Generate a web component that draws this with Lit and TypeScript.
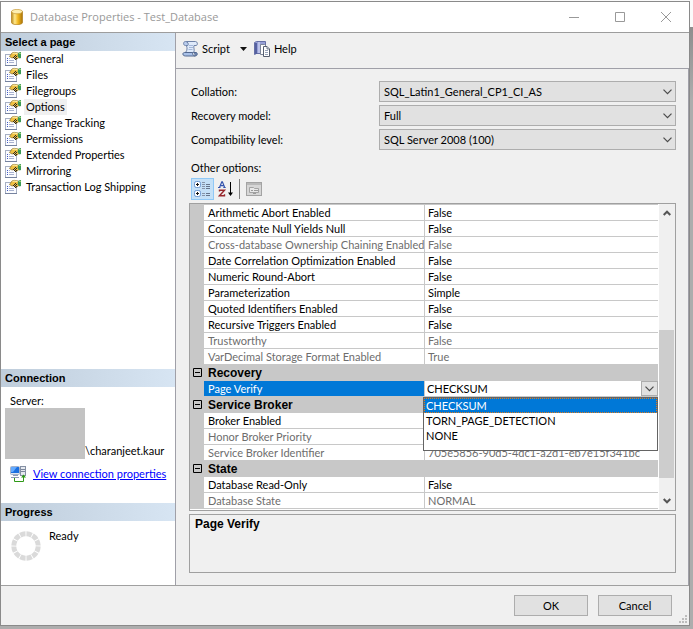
import { LitElement, html, css, svg, nothing } from "lit";
import { customElement, property, state } from "lit/decorators.js";
import { classMap } from "lit/directives/class-map.js";

interface Option {
  name: string;
  value: string;
  locked?: boolean;
  choices?: string[];
}
interface Group {
  title?: string;
  options: Option[];
}

const PAGES = [
  "General",
  "Files",
  "Filegroups",
  "Options",
  "Change Tracking",
  "Permissions",
  "Extended Properties",
  "Mirroring",
  "Transaction Log Shipping",
];

const SETTINGS = [
  { id: "collation", label: "Collation:", value: "SQL_Latin1_General_CP1_CI_AS" },
  { id: "recovery", label: "Recovery model:", value: "Full" },
  { id: "compat", label: "Compatibility level:", value: "SQL Server 2008 (100)" },
];

const GROUPS: Group[] = [
  {
    options: [
      { name: "Arithmetic Abort Enabled", value: "False" },
      { name: "Concatenate Null Yields Null", value: "False" },
      { name: "Cross-database Ownership Chaining Enabled", value: "False", locked: true },
      { name: "Date Correlation Optimization Enabled", value: "False" },
      { name: "Numeric Round-Abort", value: "False" },
      { name: "Parameterization", value: "Simple" },
      { name: "Quoted Identifiers Enabled", value: "False" },
      { name: "Recursive Triggers Enabled", value: "False" },
      { name: "Trustworthy", value: "False", locked: true },
      { name: "VarDecimal Storage Format Enabled", value: "True", locked: true },
    ],
  },
  {
    title: "Recovery",
    options: [
      { name: "Page Verify", value: "CHECKSUM", choices: ["CHECKSUM", "TORN_PAGE_DETECTION", "NONE"] },
    ],
  },
  {
    title: "Service Broker",
    options: [
      { name: "Broker Enabled", value: "False" },
      { name: "Honor Broker Priority", value: "False", locked: true },
      { name: "Service Broker Identifier", value: "705e5856-90d5-4dc1-a2d1-eb7e15f341bc", locked: true },
    ],
  },
  {
    title: "State",
    options: [
      { name: "Database Read-Only", value: "False" },
      { name: "Database State", value: "NORMAL", locked: true },
    ],
  },
];

const icon = (w: number, h: number, body: unknown) =>
  html`<svg class="icon" width=${w} height=${h} viewBox="0 0 ${w} ${h}" aria-hidden="true">${body}</svg>`;

const databaseIcon = () => icon(12, 16, svg`
  <defs><linearGradient id="gold"><stop offset="0" stop-color="#b98a1c"/><stop offset=".3" stop-color="#ffe88c"/><stop offset=".6" stop-color="#f2b71d"/><stop offset="1" stop-color="#a8730a"/></linearGradient></defs>
  <path d="M.5 2.5v11c0 1.3 2.5 2.2 5.500 2.200s5.500-.9 5.500-2.200v-11z" fill="url(#gold)" stroke="#b07d18" stroke-width=".7"/>
  <ellipse cx="6" cy="2.600" rx="5.500" ry="2.200" fill="#fdeeb0" stroke="#c79a35" stroke-width=".7"/>`);

const pageIcon = () => icon(17, 16, svg`
  <rect x=".5" y="3.500" width="11" height="11" fill="#fbfcff" stroke="#a7b0c4"/>
  <path d="M0 14.500h12" stroke="#76839f"/>
  <path d="M2 7.500h1M2 9.500h1M2 11.500h1" stroke="#3f57c4"/>
  <path d="M4 7.500h1M4 9.500h5M4 11.500h5" stroke="#a9b2cf"/>
  <path d="M4.500 5.500 7 2l2-.7 4 .7 1.500 2-1 3-2.500 1.500-2-2-2 .5z" fill="#efc042" stroke="#8a6e22" stroke-width=".7"/>
  <path d="M7.500 2.600 9 2l3.500.6" stroke="#fff3b5" fill="none"/>
  <path d="M8 6.500h1M10 6.500h1M9 5.500h1M11 5.500h1M9 7.500h1M11 7.500h1M10 4.500h1M10 8.500h1" stroke="#2b2720"/>
  <path d="M13.500 1.500l2.500-.5v6l-1.500.5-2-2.500z" fill="#3c9a55"/>
  <path d="M14 2.500h2" stroke="#9ad072"/>`);

const scriptIcon = () => icon(17, 16, svg`
  <path d="M4 .5h9.500c2.300 0 2.500 4 .5 4h-2c-.8 2 1 4.500-.3 7H3.500c2-2.500 1.800-4.500.9-7-.9-1-1.200-3-.4-4z" fill="#dfeafa" stroke="#6f83a8"/>
  <path d="M3.500.5c-2.600 0-2.600 4 0 4h2.300c1-1 .4-4-2.300-4z" fill="#b9cced" stroke="#6f83a8"/>
  <path d="M2.500 11.500h8c0 1.800.8 3.500 2.500 3.500H3.500c-3.300 0-3.300-3.500-1-3.500z" fill="#a9c1e8" stroke="#53688f"/>
  <path d="M13 15c2.500 0 2.800-2.500 1.500-3.500H11.500" fill="#6e85ae" stroke="#53688f"/>
  <path d="M7 4.500h4M7 6.500h4M6.500 8.500h4" stroke="#a4b8da"/>`);

const helpIcon = () => icon(17, 16, svg`
  <path d="M.5 1.500 2.500.5h9v12h-9l-2 1z" fill="#97a0d6" stroke="#6670a6"/>
  <path d="M1 2h2v11H1z" fill="#5661a0"/>
  <path d="M4 1h2v11H4z" fill="#bcc3ea"/>
  <path d="M6.500 3.500h4l2 2v8h-6z" fill="#fff" stroke="#7c8598"/>
  <path d="M9.500 5.500h3.500l2.500 2.500v7.500h-6z" fill="#fff" stroke="#565f70"/>
  <path d="M13 5.500V8h2.500" fill="#d4dae6" stroke="#565f70" stroke-width=".8"/>
  <path d="M11 9.500h3M11 11.500h3M11 13.500h3" stroke="#98a3b8"/>`);

const categorizedIcon = () => icon(17, 16, svg`
  <rect x=".5" y=".5" width="6" height="6" rx="1.800" fill="#fff" stroke="#6f9ad2"/>
  <rect x=".5" y="9.500" width="6" height="6" rx="1.800" fill="#fff" stroke="#6f9ad2"/>
  <path d="M2 3.500h3M3.500 2v3M2 12.500h3M3.500 11v3" stroke="#111"/>
  <path d="M8 1.500h3M8 3.500h3M8 5.500h3M8 7.500h3M8 12.500h3M8 14.500h3" stroke="#8794a8"/>
  <path d="M12 3.500h4M12 5.500h4M12 7.500h4M12 12.500h4M12 14.500h4" stroke="#66758c"/>`);

const sortIcon = () => icon(16, 16, svg`
  <path d="M1.500 6.500 3.800.8h.6L6.700 6.500M2.400 4.600h3.400M0 6.500h2.500M5.300 6.500h2.400" fill="none" stroke="#3353ad" stroke-width="1.200"/>
  <path d="M1.500 10.500V9.300h5L1.500 14.700h5v-1.500" fill="none" stroke="#97272c" stroke-width="1.400"/>
  <path d="M12.500 1v12" stroke="#000"/><path d="M10 11.500h5L12.500 15z"/>`);

const pagesIcon = () => icon(16, 16, svg`
  <rect x=".5" y="1.500" width="15" height="13" fill="#d6d6d6" stroke="#a3a3a3"/>
  <rect x="1" y="2" width="14" height="2" fill="#b9b9b9"/>
  <path d="M3.500 6.500h4l1 1h4v4h-9z" fill="#e8e8e8" stroke="#a3a3a3"/>
  <path d="M5 9.500h2M8 9.500h4M7 12.500h3" stroke="#9a9a9a"/>`);

const serversIcon = () => icon(16, 16, svg`
  <rect x="10.500" y=".5" width="5" height="9" fill="#e5e9ef" stroke="#8590a3"/>
  <path d="M11 3.500h4M11 5.500h4" stroke="#7b879c"/>
  <rect x=".5" y=".5" width="9" height="8" rx="1" fill="#dce5f2" stroke="#a3b1c9"/>
  <rect x="1" y="1" width="8" height="6" fill="#1a6fe0"/>
  <path d="M1 1h6L3 6H1z" fill="#63aaff"/>
  <path d="M3 9.500h5M1 11.500h8" stroke="#8b9ab8"/>
  <path d="M4.500 12v3.500h9V11" fill="none" stroke="#2e9a16"/>
  <path d="M11 11.500 13.500 8.500 16 11.500z" fill="#2e9a16"/>`);

const chevron = () => icon(9, 6, svg`<path d="M.5.7 4.500 4.700 8.500.7" fill="none" stroke="#4b4b4b" stroke-width="1.200"/>`);
const scrollArrow = (down: boolean) => icon(8, 6, svg`
  <path d=${down ? "M.7 1 4 4.300 7.300 1" : "M.7 5 4 1.700 7.300 5"} fill="none" stroke="#555" stroke-width="2"/>`);
const minusBox = () => icon(9, 9, svg`<path d="M.5.5h8v8h-8zM2 4.500h5" fill="none" stroke="#000"/>`);
const spinner = () => icon(30, 30, svg`
  <circle cx="15" cy="15" r="12.200" fill="none" stroke="#dadada" stroke-width="5" pathLength="120" stroke-dasharray="8.500 1.500" stroke-dashoffset="-.7"/>`);
const grip = () => icon(8, 8, svg`
  <path d="M6 0h2v2H6zM3 3h2v2H3zM6 3h2v2H6zM0 6h2v2H0zM3 6h2v2H3zM6 6h2v2H6z" fill="#bdbdbd"/>`);

@customElement("property-grid")
export class PropertyGrid extends LitElement {
  @property({ attribute: false }) groups: Group[] = [];
  @property() selected = "";
  @state() private open = true;

  static styles = css`
    :host { display: flex; border: 1px solid #a0a0a0; background: #fff; }
    .icon { display: block; }
    .rows { flex: 1; min-width: 0; padding-bottom: 1px; }
    table { width: 100%; table-layout: fixed; border-spacing: 0; border-top: 1px solid #c8c8c8; }
    .gutter { width: 14px; }
    .names { width: 221px; }
    td, th { height: 14px; padding: 1px 0 0; line-height: 14px; text-align: left; font-weight: normal; white-space: nowrap; border-bottom: 1px solid #c8c8c8; }
    td:first-child, .group th, .group td { background: #c8c8c8; }
    .group td { height: 15px; padding: 0; }
    .group th { font: bold 12px/14px "Liberation Sans", Arial, sans-serif; padding-left: 4px; }
    .name { padding-left: 4px; border-right: 1px solid #c8c8c8; }
    .value { padding-left: 3px; overflow: hidden; }
    .locked .name, .locked .value { color: #6d6d6d; }
    .current .name { background: #0078d7; color: #fff; }
    .current .value { position: relative; overflow: visible; padding: 0 0 0 2px; }
    .toggle { display: block; margin: 0 auto; padding: 0; border: 0; background: none; }
    .editor { display: flex; height: 15px; }
    .editor input { flex: 1; min-width: 0; padding: 1px 0 0; border: 0; outline: 0; font: inherit; background: none; }
    .drop { width: 17px; display: grid; place-items: center; padding: 0; border: 1px solid #adadad; background: #e1e1e1; }
    .menu { position: absolute; z-index: 1; top: 16px; left: -2px; right: 0; margin: 0; padding: 0 0 7px; list-style: none; border: 1px solid #646464; background: #fff; }
    .menu li { padding: 1px 0 0 2px; line-height: 14px; }
    .menu .picked { background: #0078d7; color: #fff; outline: 1px dotted #e07a1c; outline-offset: -1px; }
    .scroll { width: 17px; box-sizing: border-box; display: flex; flex-direction: column; align-items: center; justify-content: space-between; padding: 6px 0; border-left: 1px solid #fff; background: #f0f0f0; }
    .thumb { align-self: stretch; width: 15px; height: 148px; margin-top: 94px; background: #cdcdcd; }
  `;

  private row(o: Option) {
    const current = o.name === this.selected;
    return html`<tr class=${classMap({ locked: !!o.locked, current })}>
      <td></td>
      <th class="name" scope="row">${o.name}</th>
      <td class="value">
        ${current
          ? html`<div class="editor">
                <input aria-label=${o.name} .value=${o.value} readonly />
                <button class="drop" aria-label="Show choices" @click=${() => (this.open = !this.open)}>${chevron()}</button>
              </div>
              ${this.open
                ? html`<ul class="menu" role="listbox" aria-label=${o.name}>
                    ${o.choices?.map((c) => html`<li role="option" aria-selected=${c === o.value} class=${classMap({ picked: c === o.value })}>${c}</li>`)}
                  </ul>`
                : nothing}`
          : o.value}
      </td>
    </tr>`;
  }

  render() {
    return html`
      <div class="rows">
        <table>
          <colgroup><col class="gutter" /><col class="names" /><col /></colgroup>
          ${this.groups.map((g) => html`<tbody>
            ${g.title
              ? html`<tr class="group">
                  <td><button class="toggle" aria-label="Collapse ${g.title}">${minusBox()}</button></td>
                  <th colspan="2" scope="rowgroup">${g.title}</th>
                </tr>`
              : nothing}
            ${g.options.map((o) => this.row(o))}
          </tbody>`)}
        </table>
      </div>
      <div class="scroll">${scrollArrow(false)}<div class="thumb"></div>${scrollArrow(true)}</div>
    `;
  }
}

@customElement("app-root")
export class AppRoot extends LitElement {
  @state() private page = "Options";

  static styles = css`
    :host { min-height: 100vh; box-sizing: border-box; padding: 1px 3px 3px 0; display: flex; background: linear-gradient(#fafafa 27px, #8e8e8e 27px, #adadad 100px, #adadad); font: 11px/16px Lato, "Liberation Sans", Arial, sans-serif; color: #000; }
    .icon { display: block; flex: none; }
    button { font: inherit; color: inherit; padding: 0; border: 0; background: none; }
    .window { flex: 1; min-width: 0; display: flex; flex-direction: column; border: 1px solid #8a8a8a; background: #f0f0f0; }
    .titlebar { display: flex; align-items: center; height: 30px; padding-left: 10px; background: #fff; border-bottom: 1px solid #9d9d9d; color: #999; font: 11px/16px "Open Sans", "Noto Sans", sans-serif; }
    .titlebar h1 { flex: 1; margin: 0 0 0 7px; font: inherit; }
    .caption { width: 46px; height: 30px; display: grid; place-items: center; }
    .body { flex: 1; display: flex; border-bottom: 1px solid #a0a0a0; }
    .side { width: 174px; flex: none; display: flex; flex-direction: column; background: #fff; border-right: 1px solid #a0a0a8; }
    .side h2 { margin: 0; padding-left: 4px; font: bold 11px/18px "Liberation Sans", Arial, sans-serif; background: linear-gradient(90deg, #bfcddb, #d7e5f3); }
    .pages { flex: 1; margin: 0; padding: 0; list-style: none; }
    .pages button { display: flex; gap: 2px; padding-left: 4px; line-height: 16px; }
    .pages span { padding: 0 2px; }
    .pages .on span { background: #f0f0f0; }
    .connection { height: 116px; box-sizing: border-box; padding: 7px 0 0 4px; }
    .connection p { margin: 0; padding-left: 5px; line-height: 14px; }
    .server { display: flex; align-items: flex-end; line-height: 16px; }
    .mask { width: 80px; height: 51px; background: #c3c3c3; }
    .link { display: flex; align-items: center; gap: 7px; margin-top: 7px; padding-left: 5px; }
    a { color: #00f; }
    .progress { display: flex; gap: 8px; height: 64px; box-sizing: border-box; padding: 7px 0 0 10px; }
    .progress .icon { margin-top: 3px; }
    .main { flex: 1; min-width: 0; display: flex; flex-direction: column; }
    .toolbar { display: flex; align-items: center; height: 36px; box-sizing: border-box; padding: 0 0 4px 6px; border-bottom: 1px solid #a0a0a8; }
    .toolbar button { display: flex; align-items: center; gap: 3px; }
    .toolbar .more { margin: 0 7px 0 10px; }
    .content { flex: 1; display: flex; flex-direction: column; padding: 12px 12px 12px 13px; border-right: 1px solid #a0a0a8; }
    .settings { display: grid; grid-template-columns: 188px 1fr; row-gap: 3px; padding-left: 2px; align-items: center; }
    .pick { display: grid; align-items: center; }
    .pick select, .pick .icon { grid-area: 1 / 1; }
    .pick .icon { justify-self: end; margin-right: 4px; pointer-events: none; }
    select { width: 100%; height: 21px; padding: 0 20px 0 4px; appearance: none; border: 1px solid #adadad; border-radius: 0; background: #e1e1e1; font: inherit; color: inherit; }
    .other { margin: 10px 0 2px 2px; font: inherit; line-height: 16px; }
    .tools { display: flex; align-items: center; height: 22px; margin-bottom: 3px; padding-left: 2px; }
    .tools button { display: grid; place-items: center; height: 22px; }
    .tools .active { width: 23px; box-sizing: border-box; border: 1px solid #90c8f6; background: #c4e0f7; }
    .tools .sort { width: 23px; }
    .rule { width: 1px; height: 20px; margin: 0 6px 0 2px; background: #808080; }
    .hint { flex: 1; margin-top: 3px; border: 1px solid #a0a0a0; padding: 1px 5px; }
    .hint h2 { margin: 0; font: bold 12px/16px "Liberation Sans", Arial, sans-serif; }
    .footer { display: flex; justify-content: flex-end; gap: 10px; height: 39px; box-sizing: border-box; padding-top: 9px; }
    .footer button { width: 74px; height: 21px; border: 1px solid #adadad; background: #e1e1e1; }
    .footer .icon { align-self: flex-end; margin: 0 2px 2px -3px; }
  `;

  render() {
    return html`
      <div class="window">
        <header class="titlebar">
          ${databaseIcon()}
          <h1>Database Properties - Test_Database</h1>
          <button class="caption" aria-label="Minimize">${icon(10, 10, svg`<path d="M0 5.500h10" stroke="#999"/>`)}</button>
          <button class="caption" aria-label="Maximize">${icon(10, 10, svg`<path d="M.5.5h9v9h-9z" fill="none" stroke="#999"/>`)}</button>
          <button class="caption" aria-label="Close">${icon(10, 10, svg`<path d="M0 0l10 10M10 0 0 10" stroke="#999"/>`)}</button>
        </header>
        <div class="body">
          <aside class="side">
            <h2>Select a page</h2>
            <ul class="pages">
              ${PAGES.map((p) => html`<li>
                <button class=${classMap({ on: p === this.page })} @click=${() => (this.page = p)}>${pageIcon()}<span>${p}</span></button>
              </li>`)}
            </ul>
            <h2>Connection</h2>
            <section class="connection">
              <p>Server:</p>
              <div class="server"><div class="mask"></div><span>\\charanjeet.kaur</span></div>
              <div class="link">${serversIcon()}<a href="#connection">View connection properties</a></div>
            </section>
            <h2>Progress</h2>
            <section class="progress">${spinner()}<span>Ready</span></section>
          </aside>
          <main class="main">
            <div class="toolbar">
              <button>${scriptIcon()}<span>Script</span></button>
              <button class="more" aria-label="Script targets">${icon(7, 4, svg`<path d="M0 0h7L3.500 4z" fill="#111"/>`)}</button>
              <button>${helpIcon()}<span>Help</span></button>
            </div>
            <div class="content">
              <div class="settings">
                ${SETTINGS.map((s) => html`
                  <label for=${s.id}>${s.label}</label>
                  <div class="pick"><select id=${s.id}><option>${s.value}</option></select>${chevron()}</div>`)}
              </div>
              <h2 class="other">Other options:</h2>
              <div class="tools">
                <button class="active" aria-label="Categorized">${categorizedIcon()}</button>
                <button class="sort" aria-label="Alphabetical">${sortIcon()}</button>
                <div class="rule"></div>
                <button disabled aria-label="Property pages">${pagesIcon()}</button>
              </div>
              <property-grid .groups=${GROUPS} selected="Page Verify"></property-grid>
              <section class="hint"><h2>Page Verify</h2></section>
            </div>
          </main>
        </div>
        <footer class="footer">
          <button>OK</button>
          <button>Cancel</button>
          ${grip()}
        </footer>
      </div>
    `;
  }
}
